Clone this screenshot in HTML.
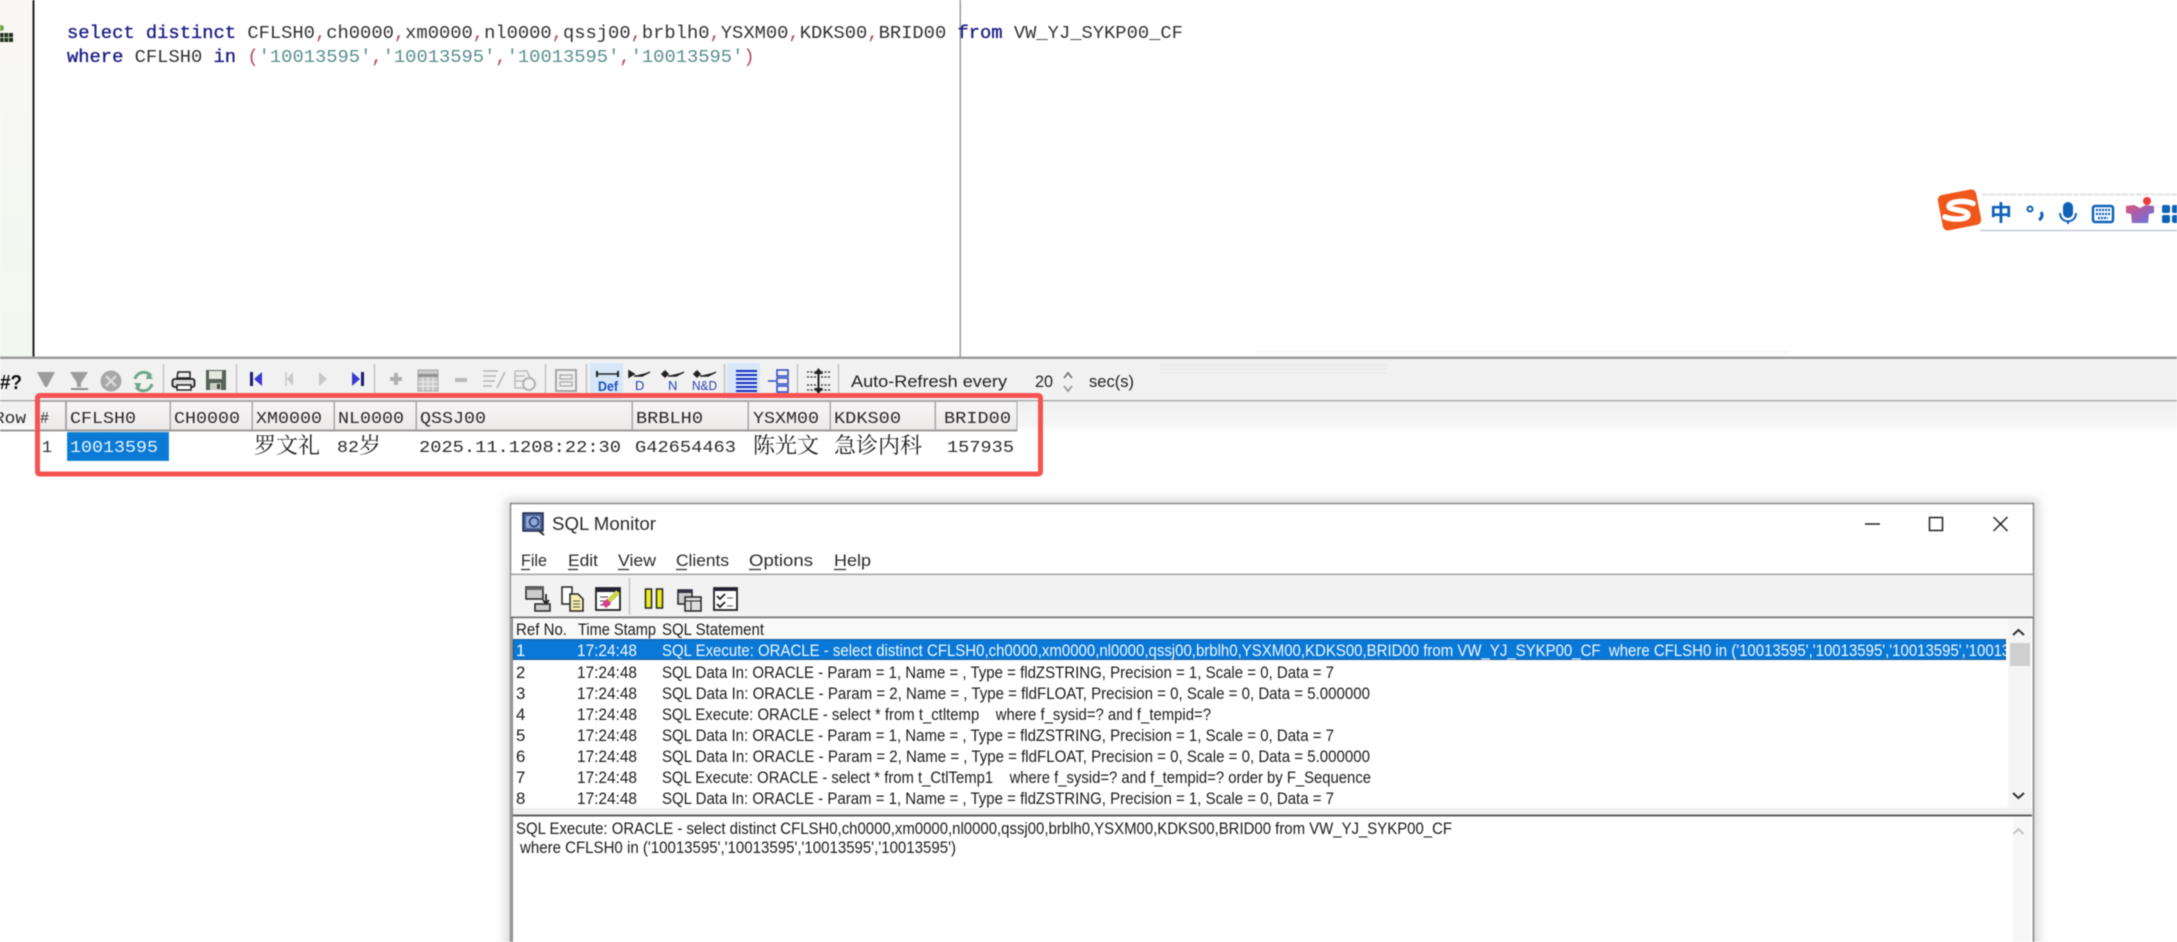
<!DOCTYPE html>
<html lang="zh"><head><meta charset="utf-8"><title>SQL Monitor</title>
<style>
html,body{margin:0;padding:0;background:#fff;width:2177px;height:942px;overflow:hidden}
svg{display:block;position:absolute;left:0;top:0;filter:blur(.4px)}
text{white-space:pre}
.m{font-family:"Liberation Mono","Noto Sans CJK SC",monospace}
.s{font-family:"Liberation Sans","Noto Sans CJK SC",sans-serif}
.c{font-family:"Liberation Serif","Noto Serif CJK SC","Noto Sans CJK SC",serif}
.l{font-size:16.8px;fill:#1c1c1c}
.g{font-size:16.5px;fill:#2a2a2a}
.kw{fill:#1c1c86;stroke:#1c1c86;stroke-width:.35px}
.id{fill:#333}
.p{fill:#b84a5a}
.st{fill:#5a8f8f}
</style></head><body>
<svg width="2177" height="942" viewBox="0 0 2177 942" xmlns="http://www.w3.org/2000/svg">
<defs>
<linearGradient id="ls" x1="0" y1="0" x2="0" y2="1"><stop offset="0" stop-color="#f9f7f5"/><stop offset="1" stop-color="#f2f8ef"/></linearGradient>
<linearGradient id="fade" x1="0" y1="0" x2="0" y2="1"><stop offset="0" stop-color="#f1f1f1"/><stop offset=".8" stop-color="#f6f6f6"/><stop offset="1" stop-color="#fff"/></linearGradient>
<linearGradient id="hd" x1="0" y1="0" x2="0" y2="1"><stop offset="0" stop-color="#f7f5f5"/><stop offset="1" stop-color="#ece9e9"/></linearGradient>
<linearGradient id="shirt" x1="0" y1="0" x2="1" y2="1"><stop offset="0" stop-color="#e0507a"/><stop offset="1" stop-color="#5a78e8"/></linearGradient>
<filter id="sh" x="-3%" y="-6%" width="106%" height="112%"><feGaussianBlur stdDeviation="5"/></filter>
<clipPath id="c1"><rect x="510" y="639" width="1496" height="22"/></clipPath>
</defs>

<!-- left strip + editor -->
<rect x="0" y="0" width="33" height="357" fill="url(#ls)"/>
<circle cx="1" cy="28" r="3" fill="#6fa84a"/>
<rect x="0" y="33" width="13" height="9" fill="#20301f"/>
<path d="M0 37.5H13M4 33V42M8.500 33V42" stroke="#b9c5b0" stroke-width="1"/>
<rect x="32.500" y="0" width="2" height="357" fill="#222"/>
<rect x="959.500" y="0" width="1.500" height="357" fill="#9a9a9a"/>

<text class="m" font-size="18.8" y="38" x="67"><tspan class="kw">select distinct</tspan><tspan class="id"> CFLSH0</tspan><tspan class="p">,</tspan><tspan class="id">ch0000</tspan><tspan class="p">,</tspan><tspan class="id">xm0000</tspan><tspan class="p">,</tspan><tspan class="id">nl0000</tspan><tspan class="p">,</tspan><tspan class="id">qssj00</tspan><tspan class="p">,</tspan><tspan class="id">brblh0</tspan><tspan class="p">,</tspan><tspan class="id">YSXM00</tspan><tspan class="p">,</tspan><tspan class="id">KDKS00</tspan><tspan class="p">,</tspan><tspan class="id">BRID00</tspan><tspan class="id"> </tspan><tspan class="kw">from</tspan><tspan class="id"> VW_YJ_SYKP00_CF</tspan></text>
<text class="m" font-size="18.8" y="62" x="67"><tspan class="kw">where</tspan><tspan class="id"> CFLSH0 </tspan><tspan class="kw">in</tspan><tspan class="id"> </tspan><tspan class="p">(</tspan><tspan class="st">'10013595'</tspan><tspan class="p">,</tspan><tspan class="st">'10013595'</tspan><tspan class="p">,</tspan><tspan class="st">'10013595'</tspan><tspan class="p">,</tspan><tspan class="st">'10013595'</tspan><tspan class="p">)</tspan></text>

<!-- sogou bar -->
<path d="M1982 194.500H2177" stroke="#dcdcdc" stroke-width="1.500" stroke-dasharray="6 1"/>
<path d="M1980 230.500H2177" stroke="#c6cad6" stroke-width="1.500"/>
<rect x="1940" y="192" width="39" height="36" rx="5" fill="#f0571b" transform="rotate(-11 1959 210)"/>
<path d="M1973 203.500C1965 200 1950 201 1949 206C1948.500 211 1968 209 1968 215C1967.500 220 1953 220 1945 217" fill="none" stroke="#fff" stroke-width="5.500" stroke-linecap="round"/>
<text class="s" x="1990" y="221" font-size="22" font-weight="bold" fill="#0f62b8" style="font-family:'Noto Sans CJK SC',sans-serif">中</text>
<circle cx="2030" cy="209" r="2.500" fill="none" stroke="#0f62b8" stroke-width="2"/>
<path d="M2041 212C2043 215 2042 218 2039 220" fill="none" stroke="#0f62b8" stroke-width="3"/>
<rect x="2063" y="202" width="10" height="16" rx="5" fill="#0f62b8"/>
<path d="M2060 213C2060 224 2076 224 2076 213M2068 221V224" fill="none" stroke="#0f62b8" stroke-width="2"/>
<rect x="2093" y="206" width="20" height="16" rx="2" fill="none" stroke="#0f62b8" stroke-width="2.500"/>
<path d="M2096 210H2110M2096 214H2110M2098 218H2108" stroke="#0f62b8" stroke-width="2.200" stroke-dasharray="2 1"/>
<path d="M2126 206L2134 205L2140 208L2146 205L2154 206V213L2149 214L2148 223H2132L2131 214L2126 213Z" fill="url(#shirt)"/>
<circle cx="2147" cy="201" r="4" fill="#ee3b36"/>
<rect x="2162" y="205" width="8" height="8" rx="2" fill="#0f62b8"/><rect x="2172" y="205" width="8" height="8" rx="2" fill="#0f62b8"/>
<rect x="2162" y="215" width="8" height="8" rx="2" fill="#0f62b8"/><rect x="2172" y="215" width="8" height="8" rx="2" fill="#0f62b8"/>

<!-- editor toolbar -->
<rect x="0" y="358" width="2177" height="42" fill="#f2f1f2"/>
<rect x="0" y="356.500" width="2177" height="2.500" fill="#9c9c9c"/>
<rect x="0" y="400" width="2177" height="1.500" fill="#aaa"/>
<rect x="0" y="402" width="2177" height="29" fill="url(#fade)"/>
<path d="M1160 365H1387M1160 369H1387M1160 373H1387" stroke="#e9e9e9" stroke-width="1.500"/>
<path d="M1256 352H1790" stroke="#f6f6f6" stroke-width="2"/>

<text class="s" x="0" y="389" font-size="20" font-weight="bold" fill="#111" textLength="22" lengthAdjust="spacingAndGlyphs">#?</text>
<path d="M37 372H55L47 387H45Z" fill="#9c9c9c"/>
<path d="M70 372H88L81 383V387H77V383Z" fill="#9c9c9c"/><rect x="71" y="388" width="17" height="2" fill="#8c8c8c"/>
<circle cx="111" cy="381" r="10.500" fill="#a9a7a9"/><path d="M106 376L116 386M116 376L106 386" stroke="#d8d8d8" stroke-width="2.500"/>
<path d="M135 379A9 9 0 0 1 151 376M152 384A9 9 0 0 1 136 387" fill="none" stroke="#6fa78c" stroke-width="3"/><path d="M148 372L153 379L146 379Z" fill="#6fa78c"/><path d="M139 390L134 383L141 383Z" fill="#6fa78c"/>
<path d="M163.500 364V398M236.500 364V398M374.500 364V398M545.500 364V398M586.500 364V398M724.500 364V398M797.500 364V398M838.500 364V398" stroke="#c4c4c4" stroke-width="1.500"/>

<path d="M177 378H190V372L178 372Z" fill="#eee" stroke="#222" stroke-width="1.500"/>
<rect x="172.500" y="379" width="22" height="8" rx="2" fill="#ddd" stroke="#222" stroke-width="1.800"/>
<rect x="177" y="385" width="14" height="5" fill="#fff" stroke="#222" stroke-width="1.500"/>
<rect x="206" y="370" width="20" height="20" fill="#566356"/><rect x="209" y="371" width="13" height="8" fill="#e4e8e0"/><rect x="210" y="383" width="11" height="7" fill="#c8d0c4"/><rect x="217" y="384" width="3" height="5" fill="#444"/>

<rect x="250" y="372" width="3" height="14" fill="#1b1b70"/><path d="M262 372V386L254 379Z" fill="#3a3ad0"/>
<rect x="285" y="372" width="2" height="14" fill="#cfcfcf"/><path d="M293 372V386L287 379Z" fill="#c8c8c8"/>
<path d="M319 372V386L327 379Z" fill="#c8c8c8"/>
<path d="M352 372V386L360 379Z" fill="#3a3ad0"/><rect x="361" y="372" width="3" height="14" fill="#1b1b70"/>

<path d="M390 379H402M396 373V385" stroke="#b0b0b0" stroke-width="4"/>
<rect x="418" y="370" width="20" height="21" fill="#c9c9c9" stroke="#a8a8a8"/><rect x="418" y="374" width="20" height="3" fill="#8f8f8f"/><path d="M423 377V391M428 377V391M433 377V391M418 382H438M418 386H438" stroke="#eee"/>
<rect x="455" y="378" width="12" height="4" fill="#b8b8b8"/>
<path d="M483 371H498M483 376H496M483 381H495M483 386H492M505 372L497 388" fill="none" stroke="#bcbcbc" stroke-width="1.800"/>
<path d="M515 371H527L530 378M515 376H525M515 381H524M515 371V388H524" fill="none" stroke="#bcbcbc" stroke-width="1.500"/><circle cx="529" cy="384" r="6" fill="none" stroke="#b2b2b2" stroke-width="2"/>
<rect x="556" y="370" width="20" height="21" fill="none" stroke="#a6a6a6" stroke-width="2"/><rect x="560" y="375" width="12" height="4" fill="none" stroke="#b0b0b0" stroke-width="1.500"/><rect x="560" y="382" width="12" height="4" fill="none" stroke="#b0b0b0" stroke-width="1.500"/>

<rect x="590" y="363" width="33" height="36" fill="#d6e7f7"/>
<path d="M597 374H618" stroke="#222" stroke-width="1.500"/><path d="M597 371V377M618 371V377" stroke="#222" stroke-width="2"/>
<text class="s" x="598" y="391" font-size="13.500" font-weight="bold" fill="#1f4fc0" textLength="20" lengthAdjust="spacingAndGlyphs">Def</text>
<path d="M629 371V377L634 374ZM634 376H642L650 372" fill="#222" stroke="#222" stroke-width="1.500"/>
<text class="s" x="635" y="390" font-size="13" fill="#2a3fb0">D</text>
<path d="M662 374L665 371L668 374L665 377ZM668 376H676L684 372" fill="#222" stroke="#222" stroke-width="1.500"/>
<text class="s" x="668" y="390" font-size="13" fill="#2a3fb0">N</text>
<path d="M694 374L697 371L700 374L697 377ZM700 376H708L716 372" fill="#222" stroke="#222" stroke-width="1.500"/>
<text class="s" x="692" y="390" font-size="13" fill="#2a3fb0" textLength="25" lengthAdjust="spacingAndGlyphs">N&amp;D</text>

<rect x="727" y="363" width="33" height="36" fill="#d6e7f7"/>
<path d="M736 371H757M736 375H757M736 379H757M736 383H757M736 387H757M736 391H757" stroke="#1a2ec0" stroke-width="2"/>
<path d="M768 381H776" fill="none" stroke="#2d48c8" stroke-width="1.500"/>
<rect x="777" y="370" width="11" height="6" fill="none" stroke="#2d48c8" stroke-width="1.500"/>
<rect x="777" y="378" width="11" height="6" fill="none" stroke="#2d48c8" stroke-width="1.500"/>
<rect x="777" y="386" width="11" height="6" fill="none" stroke="#2d48c8" stroke-width="1.500"/>
<path d="M807 372H830M807 377H830M807 385H830M807 390H830" stroke="#444" stroke-width="1.500" stroke-dasharray="2 1.500"/>
<path d="M818.500 368L814 374H823ZM818.500 394L814 388H823Z" fill="#222"/><path d="M818.500 374V388" stroke="#222" stroke-width="2"/>

<text class="s" x="851" y="387" font-size="17" fill="#222" textLength="156" lengthAdjust="spacingAndGlyphs">Auto-Refresh every</text>
<text class="s" x="1035" y="387" font-size="17" fill="#222" textLength="18" lengthAdjust="spacingAndGlyphs">20</text>
<path d="M1064 378L1068 373L1072 378" fill="none" stroke="#777" stroke-width="1.800"/><path d="M1064 386L1068 391L1072 386" fill="none" stroke="#999" stroke-width="1.800"/>
<text class="s" x="1089" y="387" font-size="17" fill="#222" textLength="45" lengthAdjust="spacingAndGlyphs">sec(s)</text>

<!-- grid header -->
<g fill="url(#hd)" stroke="#a8a8a8" stroke-width="1">
<rect x="35.500" y="401.500" width="30" height="28.500"/>
<rect x="66.500" y="401.500" width="103.500" height="28.500"/>
<rect x="170.500" y="401.500" width="81.500" height="28.500"/>
<rect x="252.500" y="401.500" width="81.500" height="28.500"/>
<rect x="334.500" y="401.500" width="81.500" height="28.500"/>
<rect x="416.500" y="401.500" width="215.500" height="28.500"/>
<rect x="632.500" y="401.500" width="115.500" height="28.500"/>
<rect x="748.500" y="401.500" width="81.500" height="28.500"/>
<rect x="830.500" y="401.500" width="104.500" height="28.500"/>
<rect x="935.500" y="401.500" width="81.500" height="28.500"/>
</g>
<path d="M0 430.500H1017" stroke="#9a9a9a" stroke-width="2"/>
<g class="m g">
<text x="-6" y="423" textLength="32" lengthAdjust="spacingAndGlyphs">Row</text>
<text x="40" y="423" textLength="9" lengthAdjust="spacingAndGlyphs">#</text>
<text x="70" y="423" textLength="66" lengthAdjust="spacingAndGlyphs">CFLSH0</text>
<text x="174" y="423" textLength="66" lengthAdjust="spacingAndGlyphs">CH0000</text>
<text x="256" y="423" textLength="66" lengthAdjust="spacingAndGlyphs">XM0000</text>
<text x="338" y="423" textLength="66" lengthAdjust="spacingAndGlyphs">NL0000</text>
<text x="420" y="423" textLength="66" lengthAdjust="spacingAndGlyphs">QSSJ00</text>
<text x="636" y="423" textLength="67" lengthAdjust="spacingAndGlyphs">BRBLH0</text>
<text x="753" y="423" textLength="66" lengthAdjust="spacingAndGlyphs">YSXM00</text>
<text x="834" y="423" textLength="67" lengthAdjust="spacingAndGlyphs">KDKS00</text>
<text x="944" y="423" textLength="67" lengthAdjust="spacingAndGlyphs">BRID00</text>
</g>
<rect x="67" y="432" width="102" height="29" fill="#0b79d6"/>
<rect x="67.500" y="432.500" width="101" height="28" fill="none" stroke="#6cc" stroke-width="1" stroke-dasharray="1 1.500" opacity=".6"/>
<g class="m g">
<text x="42" y="452">1</text>
<text x="70" y="452" textLength="88" lengthAdjust="spacingAndGlyphs" style="fill:#eaf6ff">10013595</text>
<text x="337" y="452" textLength="22" lengthAdjust="spacingAndGlyphs">82</text>
<text x="419" y="452" textLength="202" lengthAdjust="spacingAndGlyphs">2025.11.1208:22:30</text>
<text x="635" y="452" textLength="101" lengthAdjust="spacingAndGlyphs">G42654463</text>
<text x="947" y="452" textLength="67" lengthAdjust="spacingAndGlyphs">157935</text>
</g>
<g class="c" font-size="22" fill="#222">
<text x="254" y="453" textLength="66" lengthAdjust="spacing">罗文礼</text>
<text x="359" y="453">岁</text>
<text x="753" y="453" textLength="66" lengthAdjust="spacing">陈光文</text>
<text x="834" y="453" textLength="88" lengthAdjust="spacing">急诊内科</text>
</g>

<!-- red box -->
<rect x="37.500" y="395.500" width="1003" height="78.500" rx="2" fill="none" stroke="#f75252" stroke-width="5"/>

<!-- SQL Monitor window -->
<rect x="505" y="499" width="1534" height="460" fill="#888" opacity=".3" filter="url(#sh)"/>
<rect x="510" y="503" width="1524" height="439" fill="#fff"/>
<path d="M510.500 942V503.500H2033.500V942" fill="none" stroke="#8a8a8a" stroke-width="1.500"/>
<text class="s" x="552" y="530" font-size="18" fill="#2b2b2b" textLength="104" lengthAdjust="spacingAndGlyphs">SQL Monitor</text>
<!-- title icon -->
<rect x="523" y="513" width="20" height="18" fill="#4a6090" stroke="#1d2b55" stroke-width="1.500"/>
<rect x="526" y="516" width="14" height="12" fill="#8ea9d8"/>
<circle cx="534" cy="522" r="4.500" fill="none" stroke="#22336a" stroke-width="1.500"/>
<path d="M539 531L544 535" stroke="#333" stroke-width="2"/>
<!-- caption buttons -->
<path d="M1865 524H1880" stroke="#222" stroke-width="1.500"/>
<rect x="1929.500" y="517.500" width="13" height="13" fill="none" stroke="#222" stroke-width="1.500"/>
<path d="M1993.500 517L2007.500 531M2007.500 517L1993.500 531" stroke="#222" stroke-width="1.500"/>
<!-- menu -->
<g class="s" font-size="17" fill="#2a2a2a">
<text x="521" y="566" textLength="26" lengthAdjust="spacingAndGlyphs">File</text>
<text x="568" y="566" textLength="30" lengthAdjust="spacingAndGlyphs">Edit</text>
<text x="618" y="566" textLength="38" lengthAdjust="spacingAndGlyphs">View</text>
<text x="676" y="566" textLength="53" lengthAdjust="spacingAndGlyphs">Clients</text>
<text x="749" y="566" textLength="64" lengthAdjust="spacingAndGlyphs">Options</text>
<text x="834" y="566" textLength="37" lengthAdjust="spacingAndGlyphs">Help</text>
</g>
<path d="M521 569.500H530M568 569.500H578M618 569.500H629M676 569.500H687M749 569.500H761M834 569.500H846" stroke="#2a2a2a" stroke-width="1.200"/>
<rect x="511" y="573.500" width="1522" height="1.800" fill="#aaa"/>
<rect x="511" y="576" width="1522" height="41" fill="#f3f2f3"/>
<rect x="511" y="616.500" width="1522" height="1.800" fill="#777"/>
<!-- toolbar icons -->
<rect x="526" y="587" width="17" height="12" fill="#ccc" stroke="#222" stroke-width="1.500"/><rect x="526" y="587" width="17" height="3" fill="#666"/>
<path d="M546 594V603M543 600L546 604L549 600" fill="none" stroke="#222" stroke-width="1.800"/>
<rect x="535" y="604" width="15" height="7" fill="#ccc" stroke="#222" stroke-width="1.500"/>
<path d="M562 587H572V604H562Z" fill="#fff" stroke="#222" stroke-width="1.500"/>
<path d="M570 594H578L583 599V611H570Z" fill="#f6f0b0" stroke="#222" stroke-width="1.500"/><path d="M573 601H580M573 604H580M573 607H580" stroke="#555"/>
<rect x="596" y="588" width="24" height="22" fill="#fff" stroke="#222" stroke-width="1.800"/><rect x="596" y="588" width="24" height="4" fill="#223"/>
<path d="M600 597H608M600 601H606M600 605H610" stroke="#444"/><path d="M604 606L618 592" stroke="#c8d648" stroke-width="5"/><path d="M604 606L609 601" stroke="#e03a8c" stroke-width="6"/>
<path d="M629.500 578V615" stroke="#c5c5c5" stroke-width="1.500"/>
<rect x="645.500" y="589" width="6" height="19" fill="#ecec1c" stroke="#222" stroke-width="1.500"/>
<rect x="656.500" y="589" width="6" height="19" fill="#ecec1c" stroke="#222" stroke-width="1.500"/>
<rect x="678" y="590" width="14" height="14" fill="#ccc" stroke="#222" stroke-width="1.500"/><rect x="678" y="590" width="14" height="3" fill="#334"/>
<rect x="685" y="597" width="16" height="14" fill="#ddd" stroke="#222" stroke-width="1.500"/><path d="M685 601H701M691 601V611" stroke="#222"/>
<rect x="714" y="588" width="23" height="22" fill="#fff" stroke="#222" stroke-width="1.800"/><rect x="714" y="588" width="23" height="3" fill="#223"/>
<path d="M717 596L720 599L725 594M717 604L720 607L725 602" fill="none" stroke="#222" stroke-width="1.800"/><path d="M727 598H733M727 606H733" stroke="#555"/>

<!-- list -->
<rect x="511.500" y="618" width="1.500" height="324" fill="#8a8a8a"/>
<rect x="2032.500" y="618" width="2" height="324" fill="#9a9a9a"/>
<rect x="513" y="619" width="1495" height="20" fill="#fafafa"/>
<g class="s l">
<text x="516" y="635" textLength="51" lengthAdjust="spacingAndGlyphs">Ref No.</text>
<text x="578" y="635" textLength="78" lengthAdjust="spacingAndGlyphs">Time Stamp</text>
<text x="662" y="635" textLength="102" lengthAdjust="spacingAndGlyphs">SQL Statement</text>
</g>
<rect x="513" y="639" width="1493" height="21" fill="#0a78d7"/>
<rect x="513.500" y="639.500" width="1492" height="20" fill="none" stroke="#3a2a10" stroke-width="1" stroke-dasharray="1 1" opacity=".7"/>
<g class="s l" clip-path="url(#c1)" style="fill:#eef8ff">
<text x="516" y="656" style="fill:#eef8ff">1</text>
<text x="577" y="656" textLength="60" lengthAdjust="spacingAndGlyphs" style="fill:#eef8ff">17:24:48</text>
<text x="662" y="656" textLength="1340" lengthAdjust="spacingAndGlyphs" style="fill:#eef8ff">SQL Execute: ORACLE - select distinct CFLSH0,ch0000,xm0000,nl0000,qssj00,brblh0,YSXM00,KDKS00,BRID00 from VW_YJ_SYKP00_CF  where CFLSH0 in ('10013595','10013595','10013595','1001</text>
<text x="2002" y="656" textLength="7" lengthAdjust="spacingAndGlyphs" style="fill:#eef8ff">3</text>
</g>
<g class="s l">
<text x="516" y="678">2</text><text x="577" y="678" textLength="60" lengthAdjust="spacingAndGlyphs">17:24:48</text>
<text x="662" y="678" textLength="672" lengthAdjust="spacingAndGlyphs">SQL Data In: ORACLE - Param = 1, Name = , Type = fldZSTRING, Precision = 1, Scale = 0, Data = 7</text>
<text x="516" y="699">3</text><text x="577" y="699" textLength="60" lengthAdjust="spacingAndGlyphs">17:24:48</text>
<text x="662" y="699" textLength="708" lengthAdjust="spacingAndGlyphs">SQL Data In: ORACLE - Param = 2, Name = , Type = fldFLOAT, Precision = 0, Scale = 0, Data = 5.000000</text>
<text x="516" y="720">4</text><text x="577" y="720" textLength="60" lengthAdjust="spacingAndGlyphs">17:24:48</text>
<text x="662" y="720" textLength="549" lengthAdjust="spacingAndGlyphs">SQL Execute: ORACLE - select * from t_ctltemp    where f_sysid=? and f_tempid=?</text>
<text x="516" y="741">5</text><text x="577" y="741" textLength="60" lengthAdjust="spacingAndGlyphs">17:24:48</text>
<text x="662" y="741" textLength="672" lengthAdjust="spacingAndGlyphs">SQL Data In: ORACLE - Param = 1, Name = , Type = fldZSTRING, Precision = 1, Scale = 0, Data = 7</text>
<text x="516" y="762">6</text><text x="577" y="762" textLength="60" lengthAdjust="spacingAndGlyphs">17:24:48</text>
<text x="662" y="762" textLength="708" lengthAdjust="spacingAndGlyphs">SQL Data In: ORACLE - Param = 2, Name = , Type = fldFLOAT, Precision = 0, Scale = 0, Data = 5.000000</text>
<text x="516" y="783">7</text><text x="577" y="783" textLength="60" lengthAdjust="spacingAndGlyphs">17:24:48</text>
<text x="662" y="783" textLength="709" lengthAdjust="spacingAndGlyphs">SQL Execute: ORACLE - select * from t_CtlTemp1    where f_sysid=? and f_tempid=? order by F_Sequence</text>
<text x="516" y="804">8</text><text x="577" y="804" textLength="60" lengthAdjust="spacingAndGlyphs">17:24:48</text>
<text x="662" y="804" textLength="672" lengthAdjust="spacingAndGlyphs">SQL Data In: ORACLE - Param = 1, Name = , Type = fldZSTRING, Precision = 1, Scale = 0, Data = 7</text>
</g>
<!-- list scrollbar -->
<rect x="2008" y="619" width="23" height="189" fill="#f5f5f5"/>
<path d="M2013 635L2018.500 630L2024 635" fill="none" stroke="#333" stroke-width="2"/>
<rect x="2010" y="643" width="20" height="23" fill="#cfcfcf"/>
<path d="M2013 793L2018.500 798L2024 793" fill="none" stroke="#333" stroke-width="2"/>
<rect x="513" y="808" width="1519" height="7" fill="#f0f0f0"/>
<rect x="513" y="814.500" width="1519" height="2" fill="#5f5f5f"/>

<!-- detail pane -->
<g class="s l">
<text x="516" y="834" textLength="936" lengthAdjust="spacingAndGlyphs">SQL Execute: ORACLE - select distinct CFLSH0,ch0000,xm0000,nl0000,qssj00,brblh0,YSXM00,KDKS00,BRID00 from VW_YJ_SYKP00_CF</text>
<text x="520" y="853" textLength="436" lengthAdjust="spacingAndGlyphs">where CFLSH0 in ('10013595','10013595','10013595','10013595')</text>
</g>
<rect x="2013" y="818" width="18" height="124" fill="#f7f7f7"/>
<path d="M2013.500 834L2018.500 829L2023.500 834" fill="none" stroke="#c4c4c4" stroke-width="2"/>
</svg>
</body></html>
